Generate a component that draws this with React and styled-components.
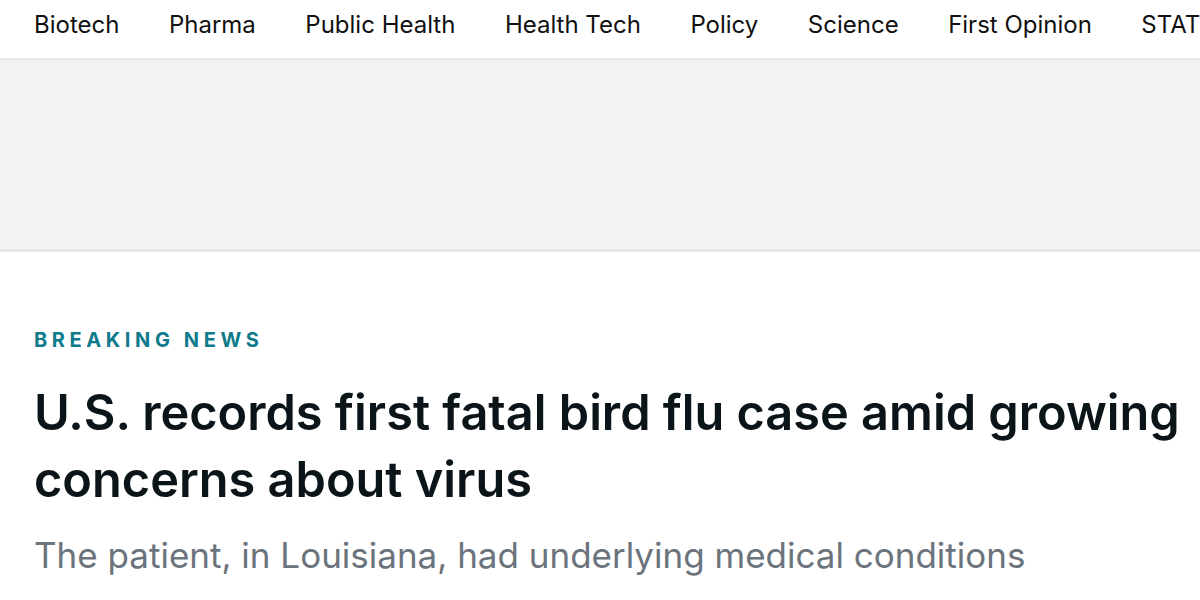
import React from 'react'
import styled, { createGlobalStyle } from 'styled-components'

const Global = createGlobalStyle`
  html, body { margin: 0; padding: 0; background: #fff; }
  body { font-family: "Inter", "Liberation Sans", sans-serif; color: #0b1419; overflow: hidden; }
`

const navItems = ['Biotech', 'Pharma', 'Public Health', 'Health Tech', 'Policy', 'Science', 'First Opinion', 'STAT+']

function App() {
  return (
    <Page>
      <Global />
      <Nav>
        {navItems.map(item => (
          <NavLink key={item} href="#">{item}</NavLink>
        ))}
      </Nav>
      <AdBand />
      <Article>
        <Kicker>Breaking News</Kicker>
        <Headline>U.S. records first fatal bird flu case amid growing concerns about virus</Headline>
        <Dek>The patient, in Louisiana, had underlying medical conditions</Dek>
      </Article>
    </Page>
  )
}

export default App

const Page = styled.div`
  width: 1200px;
  height: 600px;
  overflow: hidden;
`

const Nav = styled.nav`
  height: 58px;
  display: flex;
  align-items: center;
  gap: 49.5px;
  padding: 0 34px;
  white-space: nowrap;
  position: relative;
  z-index: 1;
  box-shadow: 0 1px 4px rgba(0,0,0,.08);
`

const NavLink = styled.a`
  font-size: 24px;
  color: #111;
  text-decoration: none;
  padding-bottom: 10px;
`

const AdBand = styled.div`
  height: 191px;
  background: #f2f2f2;
  border-bottom: 3px solid #e6e6e6;
`

const Article = styled.div`
  padding: 76px 10px 0 34px;
`

const Kicker = styled.div`
  font-size: 20px;
  font-weight: 700;
  letter-spacing: 4.6px;
  text-transform: uppercase;
  color: #0e7a8c;
  line-height: 24px;
`

const Headline = styled.h1`
  margin: 27px 0 0;
  font-size: 48.7px;
  font-weight: 600;
  line-height: 67px;
  color: #0b1419;
`

const Dek = styled.p`
  margin: 19px 0 0;
  font-size: 35px;
  line-height: 46px;
  color: #6b737c;
`
